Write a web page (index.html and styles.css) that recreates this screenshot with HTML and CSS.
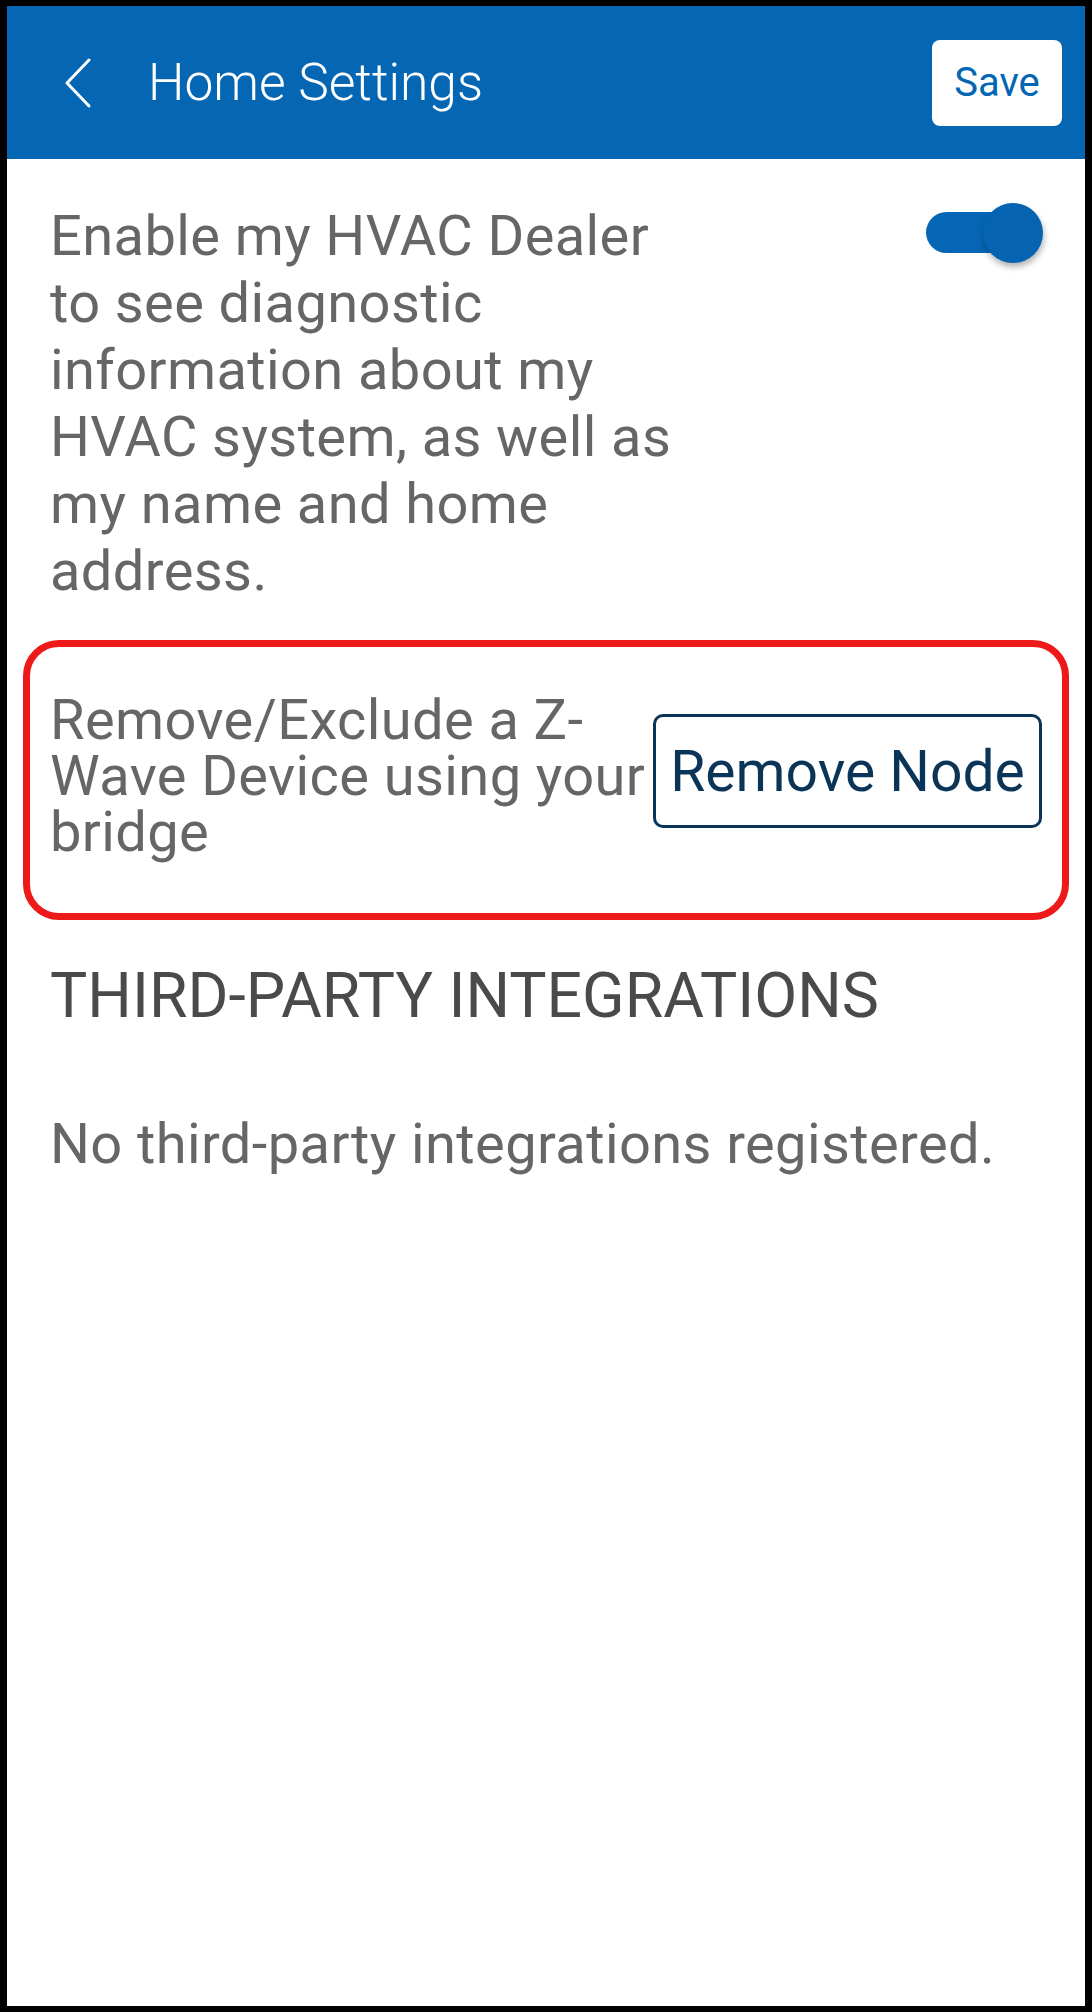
FILE: index.html
```html
<!DOCTYPE html>
<html lang="en">
<head>
    <meta charset="UTF-8">
    <meta name="viewport" content="width=device-width, initial-scale=1.0">
    <title>Home Settings</title>
    <link rel="stylesheet" href="styles.css">
</head>
<body>
    <div class="screen">
        <div class="header">
            <button class="back-button" aria-label="Back">
                <svg width="28" height="50" viewBox="0 0 28 50">
                    <polyline points="25,2 3,25 25,48" fill="none" stroke="#fff" stroke-width="3" stroke-linecap="round" stroke-linejoin="round"/>
                </svg>
            </button>
            <div class="title">Home Settings</div>
            <button class="save-button">Save</button>
        </div>

        <div class="content">
            <div class="dealer-row">
                <div class="dealer-text">Enable my HVAC Dealer to see diagnostic information about my HVAC system, as well as my name and home address.</div>
                <div class="toggle">
                    <div class="toggle-track"></div>
                    <div class="toggle-knob"></div>
                </div>
            </div>

            <div class="remove-box">
                <div class="remove-text">Remove/Exclude a Z-Wave Device using your bridge</div>
                <button class="remove-button">Remove Node</button>
            </div>

            <div class="section-title">THIRD-PARTY INTEGRATIONS</div>
            <div class="empty-text">No third-party integrations registered.</div>
        </div>
    </div>
</body>
</html>
```

FILE: styles.css
```css
body {
    margin: 0;
    padding: 6px 7px;
    background-color: #000;
    font-family: Roboto, "Noto Sans", sans-serif;
    box-sizing: border-box;
    height: 100vh;
    overflow: hidden;
}
.screen {
    background-color: #fff;
    height: 100%;
}
.header {
    height: 153px;
    background-color: #0566b3;
    display: flex;
    align-items: center;
    padding: 0 23px 0 57px;
}
.back-button {
    background: none;
    border: none;
    padding: 0;
    display: flex;
    cursor: pointer;
}
.title {
    flex: 1;
    margin-left: 56px;
    color: #fff;
    font-size: 51.5px;
    font-weight: 300;
}
.save-button {
    width: 130px;
    height: 86px;
    background-color: #fff;
    border: none;
    border-radius: 8px;
    color: #0566b3;
    font-family: Roboto, sans-serif;
    font-size: 40px;
    padding: 0;
    cursor: pointer;
}
.content {
    padding: 0 16px;
}
.dealer-row {
    display: flex;
    justify-content: space-between;
    align-items: flex-start;
    padding: 44px 26px 0 27px;
}
.dealer-text {
    width: 640px;
    font-size: 56px;
    line-height: 67px;
    letter-spacing: 0.4px;
    color: #666;
}
.toggle {
    position: relative;
    width: 117px;
    height: 60px;
}
.toggle-track {
    position: absolute;
    left: 0;
    top: 9px;
    width: 90px;
    height: 41px;
    border-radius: 21px;
    background-color: #0566b5;
}
.toggle-knob {
    position: absolute;
    right: 0;
    top: 0;
    width: 60px;
    height: 60px;
    border-radius: 50%;
    background-color: #0563b1;
    box-shadow: 1px 4px 6px rgba(0, 0, 0, 0.3);
}
.remove-box {
    margin-top: 35px;
    border: 7px solid #ee1a1a;
    border-radius: 36px;
    display: flex;
    align-items: center;
    padding: 45px 20px 53px 20px;
}
.remove-text {
    flex: 1;
    font-size: 56px;
    line-height: 56px;
    letter-spacing: 0.4px;
    color: #666;
}
.remove-button {
    background: #fff;
    border: 3px solid #0b3558;
    border-radius: 10px;
    color: #0b3558;
    font-family: Roboto, sans-serif;
    font-size: 57px;
    width: 389px;
    height: 114px;
    padding: 0;
    margin-bottom: 10px;
    cursor: pointer;
}
.section-title {
    margin-top: 39px;
    padding-left: 27px;
    font-size: 62.5px;
    color: #4a4a4a;
}
.empty-text {
    margin-top: 79px;
    padding-left: 27px;
    font-size: 56px;
    letter-spacing: 0.4px;
    color: #666;
}
```
